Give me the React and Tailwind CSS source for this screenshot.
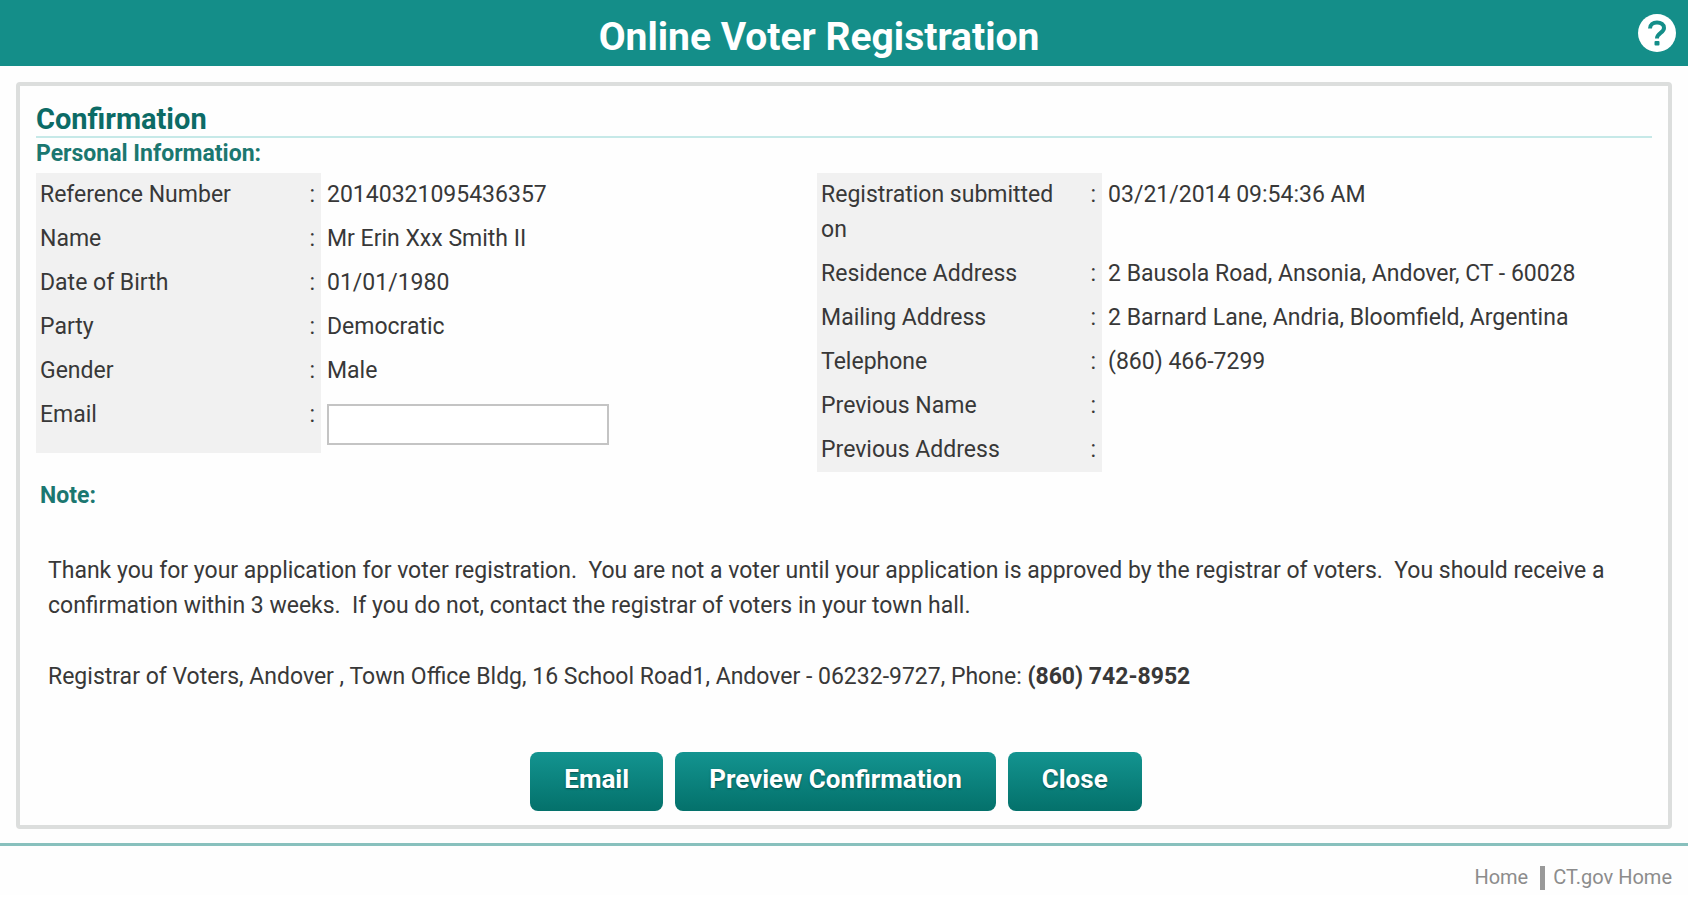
import { useState } from 'react';

const personal = [
  { label: 'Reference Number', value: '20140321095436357' },
  { label: 'Name', value: 'Mr Erin Xxx Smith II' },
  { label: 'Date of Birth', value: '01/01/1980' },
  { label: 'Party', value: 'Democratic' },
  { label: 'Gender', value: 'Male' },
];

const registration = [
  { label: 'Registration submitted on', value: '03/21/2014 09:54:36 AM' },
  { label: 'Residence Address', value: '2 Bausola Road, Ansonia, Andover, CT - 60028' },
  { label: 'Mailing Address', value: '2 Barnard Lane, Andria, Bloomfield, Argentina' },
  { label: 'Telephone', value: '(860) 466-7299' },
  { label: 'Previous Name', value: '' },
  { label: 'Previous Address', value: '' },
];

export default function App() {
  const [email, setEmail] = useState('');

  return (
    <div className="bg-[#fefefe] font-[Roboto,sans-serif] text-[23px] leading-[35px] text-[#383838]">
      <header className="flex h-[66px] items-center bg-[#148e89] pr-3 text-white">
        <h1 className="flex-1 pt-2 text-center text-[39px] font-bold">Online Voter Registration</h1>
        <button type="button" aria-label="Help">
          <HelpIcon />
        </button>
      </header>

      <main className="mx-4 mt-4 rounded-sm border-4 border-[#dcdedd] px-4 pb-[14px] pt-4">
        <h2 className="border-b-2 border-[#c6e9e8] text-[29px] font-bold leading-[34px] text-[#0c6b66]">Confirmation</h2>
        <h3 className="pb-1 font-bold leading-[31px] text-[#1b7770]">Personal Information:</h3>

        <div className="grid grid-cols-[29fr_31fr] items-start justify-items-start">
          <DetailTable rows={personal}>
            <tr>
              <LabelCells>
                <label htmlFor="email">Email</label>
              </LabelCells>
              <td className="pb-2 pl-[6px] pt-[11px] align-top">
                <input
                  id="email"
                  type="email"
                  value={email}
                  onChange={(e) => setEmail(e.target.value)}
                  className="block h-[41px] w-[282px] border-2 border-[#c4c4c4] bg-white px-2 outline-none"
                />
              </td>
            </tr>
          </DetailTable>
          <DetailTable rows={registration} />
        </div>

        <h3 className="pl-1 pt-[6px] font-bold text-[#1b7770]">Note:</h3>
        <div className="mt-10 pl-3">
          <p>
            Thank you for your application for voter registration.&nbsp; You are not a voter until your application is
            approved by the registrar of voters.&nbsp; You should receive a confirmation within 3 weeks.&nbsp; If you do
            not, contact the registrar of voters in your town hall.
          </p>
          <p className="mt-9">
            Registrar of Voters, Andover , Town Office Bldg, 16 School Road1, Andover - 06232-9727, Phone:{' '}
            <strong className="font-bold">(860) 742-8952</strong>
          </p>
        </div>

        <div className="mt-[58px] flex justify-center gap-3 pr-4">
          <ActionButton>Email</ActionButton>
          <ActionButton>Preview Confirmation</ActionButton>
          <ActionButton>Close</ActionButton>
        </div>
      </main>

      <footer className="mt-[14px] border-t-3 border-[#88c0bd] pr-4">
        <nav className="flex items-center justify-end pt-[14px] text-[20px] text-[#8c8c8c]">
          <a href="#home">Home</a>
          <span className="ml-3 mr-2 h-6 w-[5px] bg-[#999999]" />
          <a href="#ct-gov">CT.gov Home</a>
        </nav>
      </footer>
    </div>
  );
}

function DetailTable({ rows, children }) {
  return (
    <table className="border-collapse text-left">
      <tbody>
        {rows.map((row) => (
          <tr key={row.label}>
            <LabelCells>{row.label}</LabelCells>
            <td className="pb-[5px] pl-[6px] pt-1 align-top">{row.value}</td>
          </tr>
        ))}
        {children}
      </tbody>
    </table>
  );
}

function LabelCells({ children }) {
  return (
    <th scope="row" className="bg-[#f1f1f1] pb-[5px] pl-1 pt-1 align-top font-normal">
      <div className="flex w-[281px] justify-between pr-[6px]">
        <span className="w-[250px]">{children}</span>
        <span>:</span>
      </div>
    </th>
  );
}

function ActionButton({ children }) {
  return (
    <button
      type="button"
      className="h-[59px] rounded-lg bg-linear-to-b from-[#139490] to-[#04716b] px-[34px] pb-1 text-[26px] font-bold text-white [text-shadow:0_1px_2px_#00000066]"
    >
      {children}
    </button>
  );
}

function HelpIcon() {
  return (
    <svg className="block size-[38px]" viewBox="0 0 38 38" fill="none">
      <circle cx="19" cy="19" r="19" fill="#fff" />
      <path
        d="M12 14.500c0-4 3-6 7-6s7 2 7 5.500c0 5-7 5-7 10.500"
        stroke="#148e89"
        strokeWidth="4"
      />
      <rect x="16.500" y="27" width="5" height="4.500" rx="1" fill="#148e89" />
    </svg>
  );
}
